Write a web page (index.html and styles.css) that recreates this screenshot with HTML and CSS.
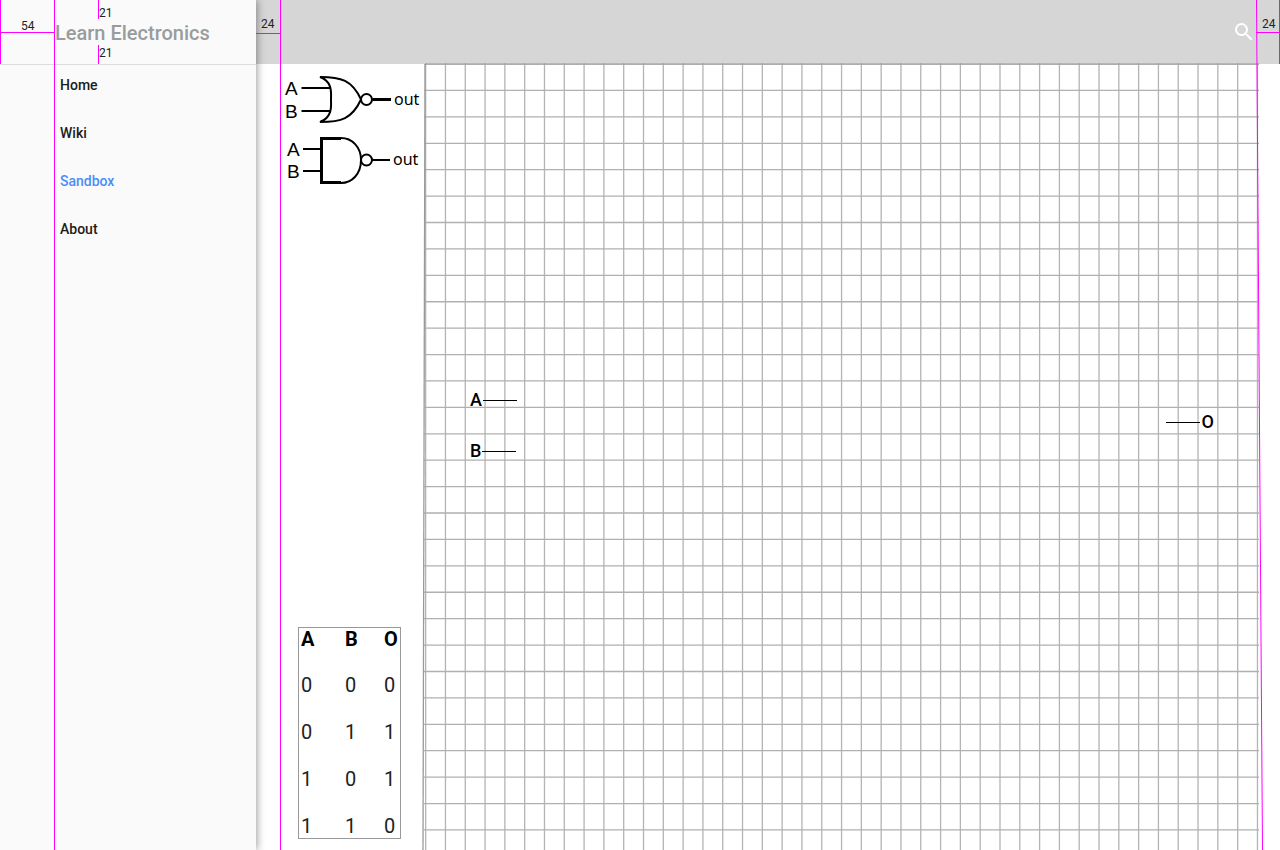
FILE: index.html
```html
<!DOCTYPE html>
<html lang="en">
<head>
<meta charset="utf-8">
<meta name="viewport" content="width=device-width, initial-scale=1">
<title>Learn Electronics</title>
<link rel="stylesheet" href="styles.css">
</head>
<body>
<div class="app">
  <aside class="drawer">
    <h1 class="drawer-title">Learn Electronics</h1>
    <nav class="nav">
      <a class="nav-link" href="#home">Home</a>
      <a class="nav-link" href="#wiki">Wiki</a>
      <a class="nav-link active" href="#sandbox">Sandbox</a>
      <a class="nav-link" href="#about">About</a>
    </nav>
  </aside>

  <div class="page">
    <header class="toolbar">
      <button class="search" type="button" aria-label="Search">
        <svg width="24" height="24" viewBox="0 0 24 24" fill="#fff"><path d="M15.5 14h-.79l-.28-.27A6.47 6.47 0 0 0 16 9.5 6.5 6.5 0 1 0 9.5 16c1.61 0 3.09-.59 4.23-1.57l.27.28v.79l5 4.99L20.49 19l-4.99-5zm-6 0C7.01 14 5 11.99 5 9.5S7.01 5 9.5 5 14 7.01 14 9.5 11.99 14 9.5 14z"/></svg>
      </button>
    </header>

    <main class="workspace">
      <section class="side">
        <div class="gates">
          <svg class="gate" width="144" height="66" viewBox="280 64 144 66" role="img" aria-label="NOR gate">
            <path d="M301.500 88H330M301.500 111H330M372 99.500H391"/>
            <path d="M320 77C341 77 352 80 361 99.500C352 119 341 122 320 122C333 117 331 105 331 99.500C331 93 333 82 320 77Z"/>
            <circle cx="366.500" cy="99.500" r="5.500"/>
            <path class="bold" d="M373 99.500H391"/>
            <text class="pin-name" x="285" y="95">A</text>
            <text class="pin-name" x="285" y="118">B</text>
            <text class="out-name" x="394" y="105">out</text>
          </svg>
          <svg class="gate" width="144" height="60" viewBox="280 130 144 60" role="img" aria-label="NAND gate">
            <path d="M303 149H321M303 171H321M372 160H390"/>
            <path d="M321.500 138H341C352 138 361 147 361 160C361 174 352 183 341 183H321.500Z"/>
            <path class="bold" d="M341 138.500H321.500V182.500H341"/>
            <circle cx="366.500" cy="160" r="5.500"/>
            <text class="pin-name" x="287" y="156">A</text>
            <text class="pin-name" x="287" y="178">B</text>
            <text class="out-name" x="393" y="165">out</text>
          </svg>
        </div>
        <table class="truth">
          <thead><tr><th scope="col">A</th><th scope="col">B</th><th scope="col">O</th></tr></thead>
          <tbody>
            <tr><td>0</td><td>0</td><td>0</td></tr>
            <tr><td>0</td><td>1</td><td>1</td></tr>
            <tr><td>1</td><td>0</td><td>1</td></tr>
            <tr><td>1</td><td>1</td><td>0</td></tr>
          </tbody>
        </table>
      </section>

      <section class="board">
        <svg class="grid" width="100%" height="100%" aria-hidden="true">
          <line x1="1" y1="0" x2="100%" y2="0" stroke="#b4b4b4" stroke-width="4000" stroke-dasharray="1.3 18.505"/>
          <line x1="0" y1="0" x2="0" y2="4000" stroke="#b0b0b0" stroke-width="4000" stroke-dasharray="1.3 25.11" stroke-dashoffset="0.6"/>
          <line x1="1" y1="0" x2="100%" y2="0" stroke="#999"/>
        </svg>
        <svg class="board-edge" width="4" height="100%" viewBox="0 0 4 786" preserveAspectRatio="none" aria-hidden="true"><line x1="3" y1="0" x2="1" y2="786" stroke="#999" stroke-width="1.3"/></svg>
        <div class="pin pin-a">A<span class="wire"></span></div>
        <div class="pin pin-b">B<span class="wire"></span></div>
        <div class="pin pin-o"><span class="wire"></span>O</div>
      </section>
    </main>
  </div>

  <svg class="guides guides-left" width="284" height="100%" aria-hidden="true">
    <path d="M0.500 0V64M0 32.500H54M98.500 0V19M98.500 45V64M256 33.500H280"/>
    <line x1="54.500" y1="0" x2="54.500" y2="100%"/>
    <line x1="280.500" y1="0" x2="280.500" y2="100%"/>
    <text x="21" y="30">54</text>
    <text x="99" y="17">21</text>
    <text x="99" y="57">21</text>
    <text x="261" y="28">24</text>
  </svg>
  <svg class="guides guides-right" width="24" height="100%" aria-hidden="true">
    <path d="M0 32.500H24M23.500 0V64"/>
    <line x1="0.500" y1="0" x2="6.500" y2="100%"/>
    <text x="6" y="28">24</text>
  </svg>
</div>
</body>
</html>
```
FILE: styles.css
```css
* { box-sizing: border-box; }

body {
  margin: 0;
  background: #fff;
  color: #111;
  font-family: Roboto, "Liberation Sans", sans-serif;
}

.app {
  position: relative;
  display: flex;
  min-height: 100vh;
  overflow: hidden;
}

.drawer {
  flex: 0 0 256px;
  z-index: 1;
  background: #fafafa;
  box-shadow: 1px 0 8px rgba(0, 0, 0, 0.4);
}

.drawer-title {
  display: flex;
  align-items: center;
  height: 65px;
  margin: 0;
  padding: 2px 0 0 55px;
  border-bottom: 1px solid #dcdcdc;
  color: #999c9e;
  font-size: 20px;
  font-weight: 500;
}

.nav {
  display: flex;
  flex-direction: column;
  gap: 24px;
  padding: 8px 0 0 60px;
}

.nav-link {
  color: #1c1c1c;
  font-size: 14px;
  font-weight: 500;
  line-height: 24px;
  text-decoration: none;
}

.nav-link.active { color: #4b8df8; }

.page {
  display: flex;
  flex: 1;
  flex-direction: column;
  min-width: 0;
}

.toolbar {
  display: flex;
  flex: 0 0 64px;
  align-items: center;
  justify-content: flex-end;
  padding-right: 24px;
  background: #d6d6d6;
}

.search {
  display: flex;
  padding: 0;
  border: 0;
  background: none;
  cursor: pointer;
}

.workspace {
  display: flex;
  flex: 1;
  padding: 0 21px 0 24px;
}

.side {
  display: flex;
  flex: 0 0 144px;
  flex-direction: column;
  justify-content: space-between;
  padding-bottom: 11px;
}

.gates {
  display: flex;
  flex-direction: column;
}

.gate {
  fill: none;
  stroke: #000;
  stroke-width: 2;
}

.gate .bold { stroke-width: 3; }

.gate text {
  fill: #000;
  stroke: none;
}

.pin-name {
  font-family: "Liberation Sans", sans-serif;
  font-size: 19px;
}

.out-name {
  font-family: "Noto Sans", sans-serif;
  font-size: 16px;
}

.truth {
  width: 103px;
  margin-left: 18px;
  border: 1px solid #999;
  border-spacing: 0;
  table-layout: fixed;
  color: #222;
  font-size: 20px;
  text-align: left;
}

.truth th {
  width: 44px;
  padding: 0 0 0 2px;
  color: #000;
  font-weight: 700;
  line-height: 22px;
}

.truth th:nth-child(2) { width: 39px; }
.truth th:nth-child(3) { width: 18px; }

.truth td {
  padding: 23px 0 0 2px;
  font-weight: 400;
  line-height: 24px;
}

.board {
  position: relative;
  flex: 1;
  min-width: 0;
}

.grid {
  position: absolute;
  inset: 0;
  overflow: visible;
  clip-path: inset(-1px 0 0 0);
}

.board-edge {
  position: absolute;
  top: 0;
  left: -2px;
}

.pin {
  position: absolute;
  display: flex;
  align-items: center;
  gap: 1px;
  color: #000;
  font-size: 18px;
  font-weight: 500;
  line-height: 22px;
}

.pin-a { top: 325px; left: 46px; }
.pin-b { top: 376px; left: 46px; }
.pin-o { top: 347px; right: 45px; gap: 2px; }

.wire {
  width: 34px;
  height: 1px;
  background: #000;
}

.guides {
  position: absolute;
  top: 0;
  z-index: 2;
  pointer-events: none;
  stroke: #f0f;
}

.guides-left { left: 0; }
.guides-right { right: 0; }

.guides text {
  fill: #222;
  stroke: none;
  font-size: 12px;
}
```
